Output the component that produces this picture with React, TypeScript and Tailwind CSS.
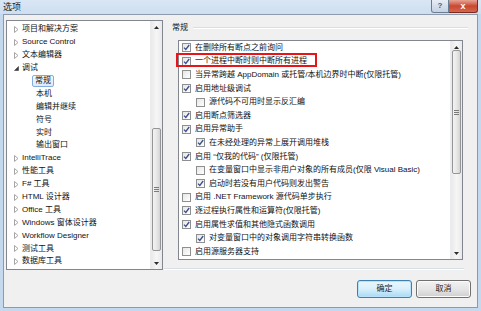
import React from "react";

type TreeItem = { t: string; arrow?: "r" | "d"; child?: boolean; sel?: boolean };

const tree: TreeItem[] = [
  { t: "项目和解决方案", arrow: "r" },
  { t: "Source Control", arrow: "r" },
  { t: "文本编辑器", arrow: "r" },
  { t: "调试", arrow: "d" },
  { t: "常规", child: true, sel: true },
  { t: "本机", child: true },
  { t: "编辑并继续", child: true },
  { t: "符号", child: true },
  { t: "实时", child: true },
  { t: "输出窗口", child: true },
  { t: "IntelliTrace", arrow: "r" },
  { t: "性能工具", arrow: "r" },
  { t: "F# 工具", arrow: "r" },
  { t: "HTML 设计器", arrow: "r" },
  { t: "Office 工具", arrow: "r" },
  { t: "Windows 窗体设计器", arrow: "r" },
  { t: "Workflow Designer", arrow: "r" },
  { t: "测试工具", arrow: "r" },
  { t: "数据库工具", arrow: "r" },
];

type Opt = { c: boolean; ind?: boolean; t: string };

const opts: Opt[] = [
  { c: true, t: "在删除所有断点之前询问" },
  { c: true, t: "一个进程中断时则中断所有进程" },
  { c: false, t: "当异常跨越 AppDomain 或托管/本机边界时中断(仅限托管)" },
  { c: true, t: "启用地址级调试" },
  { c: false, ind: true, t: "源代码不可用时显示反汇编" },
  { c: true, t: "启用断点筛选器" },
  { c: true, t: "启用异常助手" },
  { c: true, ind: true, t: "在未经处理的异常上展开调用堆栈" },
  { c: true, t: "启用 “仅我的代码” (仅限托管)" },
  { c: false, ind: true, t: "在变量窗口中显示非用户对象的所有成员(仅限 Visual Basic)" },
  { c: true, ind: true, t: "启动时若没有用户代码则发出警告" },
  { c: false, t: "启用 .NET Framework 源代码单步执行" },
  { c: true, t: "逐过程执行属性和运算符(仅限托管)" },
  { c: true, t: "启用属性求值和其他隐式函数调用" },
  { c: true, ind: true, t: "对变量窗口中的对象调用字符串转换函数" },
  { c: false, t: "启用源服务器支持" },
  { c: false, ind: true, t: "" },
];

function Arrow({ kind }: { kind?: "r" | "d" }) {
  if (kind === "r")
    return (
      <svg width="5" height="7" viewBox="0 0 5 7" className="shrink-0">
        <polygon points="0.5,0.5 4,3.5 0.5,6.5" fill="#fff" stroke="#a6a6a6" strokeWidth="1" />
      </svg>
    );
  if (kind === "d")
    return (
      <svg width="5" height="7" viewBox="0 0 5 7" className="shrink-0">
        <polygon points="4.5,1.5 4.5,5.5 0.5,5.5" fill="#3c3c3c" stroke="#3c3c3c" strokeWidth="0.6" />
      </svg>
    );
  return <span className="w-[5px] shrink-0" />;
}

function Check({ on }: { on: boolean }) {
  return (
    <span className="w-[9px] h-[9px] shrink-0 border border-[#8e8f8f] bg-gradient-to-br from-[#dcdcdc] to-[#fbfbfb] flex items-center justify-center">
      <span className="w-[7px] h-[7px] bg-gradient-to-br from-[#e6e6e6] to-[#ffffff] flex items-center justify-center">
        {on && (
          <svg width="7" height="7" viewBox="0 0 7 7">
            <path d="M1 3.6 L2.8 5.5 L6.2 1" fill="none" stroke="#3b4f8c" strokeWidth="1.3" />
          </svg>
        )}
      </span>
    </span>
  );
}

function ScrollBar({
  topGap,
  thumb,
  total,
}: {
  topGap: number;
  thumb: number;
  total: string;
}) {
  return (
    <div className={`w-[12px] ${total} flex flex-col bg-gradient-to-r from-[#e9e9e9] via-[#f6f6f6] to-[#e9e9e9] border-l border-[#ececec]`}>
      <div className="h-[12px] flex items-center justify-center shrink-0">
        <svg width="5" height="3" viewBox="0 0 5 3">
          <polygon points="0,3 2.5,0 5,3" fill="#2b2b2b" />
        </svg>
      </div>
      <div className="flex-1 relative">
        <div
          className="absolute left-[1px] right-[1px] rounded-[2px] border border-[#959595] bg-gradient-to-r from-[#f3f3f3] via-[#e8e8e8] to-[#d4d4d4] flex items-center justify-center"
          style={{ top: topGap, height: thumb }}
        >
          <div className="flex flex-col gap-[1px]">
            <span className="w-[5px] h-px bg-[#7a7a7a]" />
            <span className="w-[5px] h-px bg-[#7a7a7a]" />
            <span className="w-[5px] h-px bg-[#7a7a7a]" />
          </div>
        </div>
      </div>
      <div className="h-[12px] flex items-center justify-center shrink-0">
        <svg width="5" height="3" viewBox="0 0 5 3">
          <polygon points="0,0 2.5,3 5,0" fill="#2b2b2b" />
        </svg>
      </div>
    </div>
  );
}

export default function App() {
  return (
    <div className="w-[481px] h-[311px] overflow-hidden bg-[#c4d8ee] flex flex-col font-['Liberation_Sans','Noto_Sans_CJK_SC',sans-serif] text-[8px] leading-none text-[#111]">
      {/* title bar */}
      <div className="h-[14px] shrink-0 flex items-start bg-gradient-to-b from-[#d9e6f4] to-[#cedff1]">
        <span className="ml-[3px] mt-[3px] text-[9px] text-[#1a1a1a]">选项</span>
        <div className="flex-1" />
        <div className="flex mr-[3px] h-[13px]">
          <div className="w-[18px] h-[13px] rounded-bl-[3px] border border-[#6b7d95] border-t-0 bg-gradient-to-b from-[#e8eef6] via-[#d5dfeb] to-[#c5d2e2] flex items-center justify-center text-[8px] font-bold text-[#4a5a70]">
            ?
          </div>
          <div className="w-[29px] h-[13px] rounded-br-[3px] border border-[#7a2c22] border-t-0 border-l-0 bg-gradient-to-b from-[#e6a395] via-[#c9472f] to-[#d5664d] flex items-center justify-center text-[9px] font-bold text-white">
            x
          </div>
        </div>
      </div>

      {/* body */}
      <div className="flex-1 ml-[3px] mr-[3px] mb-[3px] border border-[#8c9aab] bg-[#f0f0f0] flex">
        {/* tree */}
        <div className="ml-[2px] mt-[5px] w-[157px] h-[250px] border border-[#82878f] bg-white flex">
          <div className="flex-1 pt-[2px] flex flex-col">
            {tree.map((it, i) => (
              <div key={i} className="h-[12.9px] flex items-center">
                {it.child ? (
                  <span
                    className={`px-[2px] h-[12px] flex items-center ${
                      it.sel
                        ? "ml-[25px] border border-[#84acdd] bg-gradient-to-b from-[#f4f9ff] to-[#dbeafc] rounded-[2px]"
                        : "ml-[27px]"
                    }`}
                  >
                    {it.t}
                  </span>
                ) : (
                  <>
                    <span className="ml-[7px]" />
                    <Arrow kind={it.arrow} />
                    <span className="ml-[3px]">{it.t}</span>
                  </>
                )}
              </div>
            ))}
          </div>
          <ScrollBar topGap={95} thumb={123} total="h-[248px]" />
        </div>

        {/* right column */}
        <div className="ml-[1px] w-[307px] flex flex-col">
          <div className="h-[25px] flex items-center">
            <span className="ml-[8px]">常规</span>
            <span className="ml-[5px] w-[275px] h-[2px] border-t border-[#d5dfe5] border-b border-b-white" />
          </div>
          <div className="relative ml-[14px] w-[285px]">
            <div className="h-[220px] border border-[#82878f] bg-white flex overflow-hidden">
              <div className="flex-1 flex flex-col overflow-hidden">
                {opts.map((o, i) => (
                  <div key={i} className="h-[13.6px] shrink-0 flex items-center">
                    <span className={o.ind ? "ml-[17px]" : "ml-[3px]"} />
                    <Check on={o.c} />
                    <span className="ml-[4px] whitespace-nowrap">{o.t}</span>
                  </div>
                ))}
              </div>
              <ScrollBar topGap={-3} thumb={124} total="h-[218px]" />
            </div>
            <div className="absolute left-[-2px] top-[13px] w-[141px] h-[14px] border-2 border-[#e8141a] pointer-events-none" />
          </div>
          <div className="mt-[8px] w-[300px] h-[2px] border-t border-[#d5dfe5] border-b border-b-white" />
          <div className="mt-[10px] flex justify-end gap-[4px]">
            <button className="w-[55px] h-[18px] rounded-[3px] border border-[#3c7fb1] bg-gradient-to-b from-[#eaf6fd] via-[#d9f0fc] to-[#a7d9f5] shadow-[inset_0_0_0_1px_#b6e3fb] flex items-center justify-center text-[8px] text-[#1c1c1c]">
              确定
            </button>
            <button className="w-[55px] h-[18px] rounded-[3px] border border-[#707070] bg-gradient-to-b from-[#f2f2f2] via-[#e6e6e6] to-[#cfcfcf] shadow-[inset_0_0_0_1px_#fbfbfb] flex items-center justify-center text-[8px] text-[#1c1c1c]">
              取消
            </button>
          </div>
        </div>
      </div>
    </div>
  );
}
